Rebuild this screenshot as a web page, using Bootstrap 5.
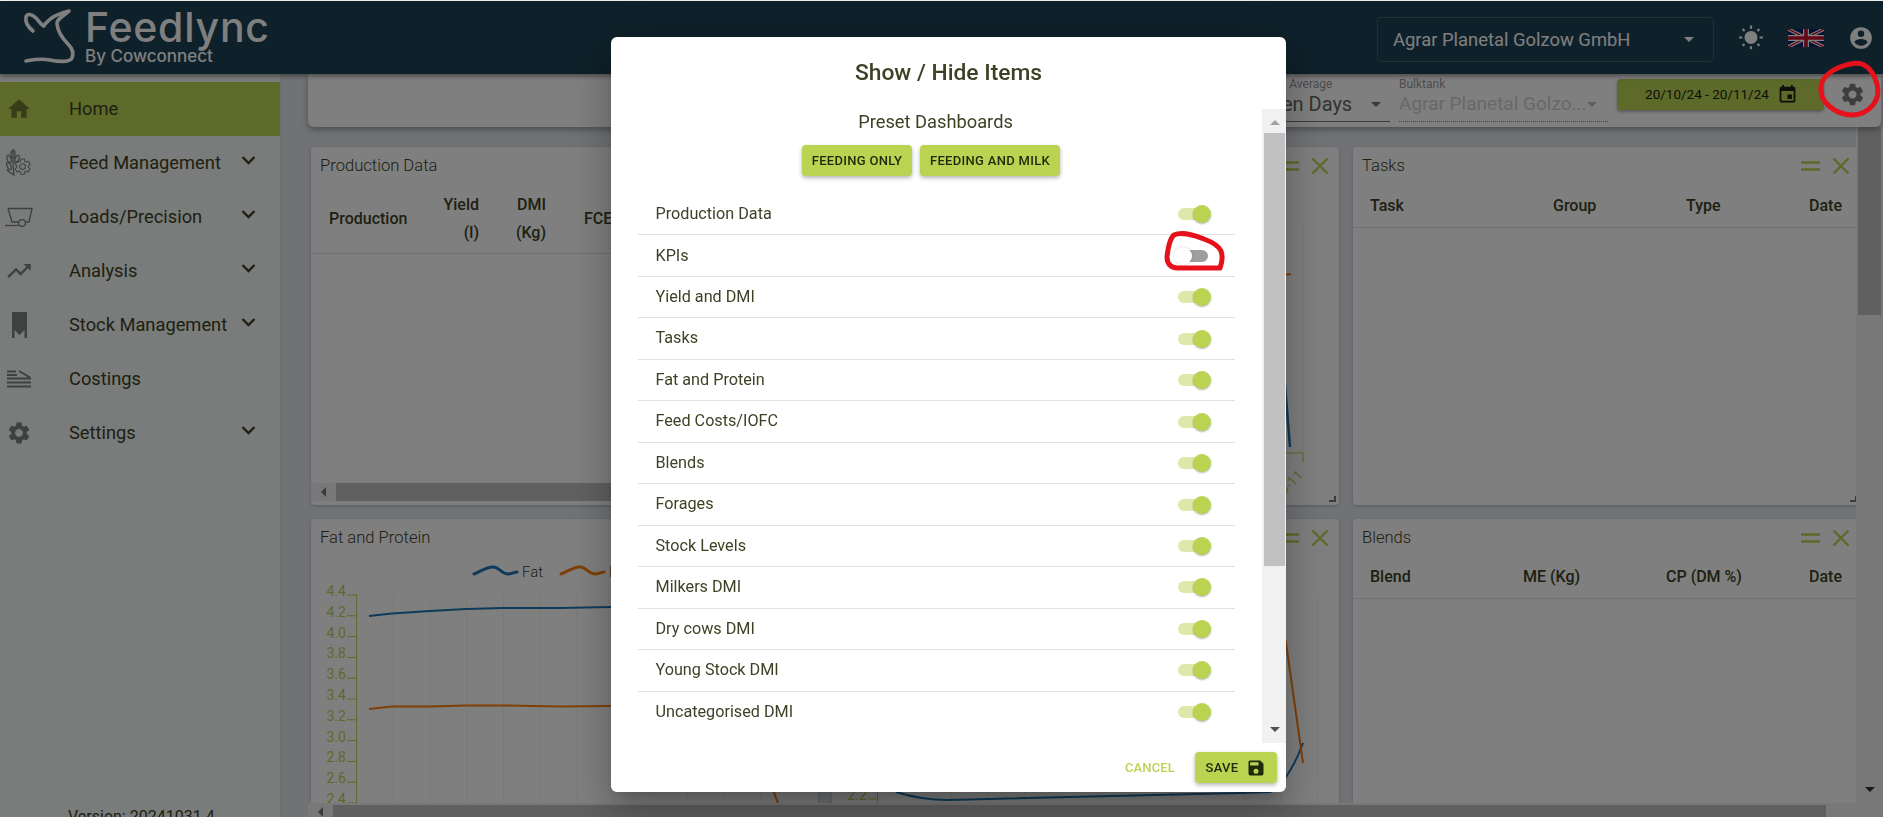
<!DOCTYPE html>
<html lang="en">
<head>
  <meta charset="UTF-8">
  <meta name="viewport" content="width=device-width, initial-scale=1">
  <title>Feedlync</title>
  <link href="https://cdn.jsdelivr.net/npm/bootstrap@5.3.3/dist/css/bootstrap.min.css" rel="stylesheet">
  <script src="https://cdn.jsdelivr.net/npm/bootstrap@5.3.3/dist/js/bootstrap.bundle.min.js"></script>
  <style>
    body { font-family: Roboto, "Liberation Sans", sans-serif; color: #3c4224; background: #fff; height: 817px; overflow: hidden; }
    .modal-backdrop { top: 1px; }

    .topbar { height: 73px; margin-top: 1px; background: #1c4052; color: #fff; box-shadow: 0 2px 5px rgba(0,0,0,.45); position: relative; z-index: 5; padding: 0 9px 0 22px; }
    .logo-text { margin: 0 0 2px 1px; }
    .logo-name { font-family: Inter, sans-serif; font-weight: 500; font-size: 41px; line-height: 34px; letter-spacing: .75px; }
    .logo-sub { font-family: Inter, sans-serif; font-weight: 500; font-size: 17px; line-height: 16px; margin-top: 4px; }
    .farm-select { width: 337px; height: 45px; margin-top: 4px; border: 1px solid #41606e; border-radius: 4px; padding: 0 19px 0 15px; font-size: 18.4px; }
    .caret-down { width: 0; height: 0; border-left: 5px solid transparent; border-right: 5px solid transparent; border-top: 5px solid currentColor; }
    .caret-up { width: 0; height: 0; border-left: 5px solid transparent; border-right: 5px solid transparent; border-bottom: 5px solid currentColor; }
    .flag-uk { width: 36px; height: 18px; }

    .below { height: 743px; background: #e0e4ec; }
    .side { width: 281px; flex: none; background: #f5f8f6; border-right: 1px solid #d8dcdc; padding-top: 8px; overflow: hidden; }
    .side .nav-link { height: 54px; padding: 0; color: #3c4224; font-size: 18.3px; }
    .side .nav-link.active-link { background: #bad452; }
    .side-ico { width: 38px; flex: none; margin-right: 31px; color: #7e8080; }
    .active-link .side-ico { color: #6f7a35; }
    .side-label { margin-top: -1px; }
    .side-chev { margin-left: auto; margin-right: 24px; margin-bottom: 6px; }
    .version { font-size: 16px; line-height: 24px; margin: auto 0 -12px 68px; }

    .filterbar { height: 53px; flex: none; margin: 0 2px 0 27px; background: #fff; border-radius: 0 0 6px 6px; box-shadow: 0 3px 6px rgba(0,0,0,.3); position: relative; z-index: 2; }
    .filter-field { height: 48px; padding-top: 3px; margin-right: 9px; flex: none; white-space: nowrap; }
    .filter-roll { width: 140px; border-bottom: 1px solid #777; color: #666; }
    .filter-tank { width: 209px; border-bottom: 1px dotted #888; color: #d0d0d0; }
    .filter-label { font-size: 12px; line-height: 14px; color: #999; }
    .filter-value { font-size: 20px; line-height: 22px; margin-top: 2px; }
    .filter-tank .filter-value { font-size: 19px; }
    .filter-roll .caret-down { margin-right: 9px; color: #777; }
    .filter-tank .caret-down { margin-right: 14px; color: #bbb; }
    .date-btn { width: 207px; height: 31px; margin: 5px 15px 0 0; padding: 0 0 0 2px; background: #bad452; border: 0; border-radius: 4px; font-size: 13.5px; color: #1c1c14; box-shadow: 0 2px 3px rgba(0,0,0,.3); }
    .gear-wrap { width: 27px; margin: 7px 15px 0 0; color: #7c7c7c; }

    .canvas { min-width: 0; overflow: hidden; }
    .below-main { min-height: 0; }
    .wgrid { display: grid; grid-template-columns: repeat(3, 507px); grid-auto-rows: 358px; gap: 14px; padding: 20px 0 0 30px; }
    .wbox { background: #fff; border-radius: 4px; position: relative; box-shadow: 0 1px 3px rgba(0,0,0,.2); overflow: hidden; }
    .wbox.resizable::after { content: ""; position: absolute; right: 3px; bottom: 3px; width: 7px; height: 6px; border-right: 2px solid #777; border-bottom: 2px solid #777; }
    .whead { height: 36px; padding: 2px 10px 0 9px; font-size: 16.6px; font-weight: 300; color: #3c4224; }
    .whead-btns { margin-left: auto; gap: 12px; }
    .wtable { table-layout: fixed; margin: 0; width: 100%; font-size: 16px; --bs-table-bg: transparent; --bs-table-color: #3c4224; }
    .wtable th { padding: 2px 0 0; font-weight: 500; vertical-align: middle; line-height: 28px; border-bottom: 1px solid #e2e2e2; }
    .wtable th:first-child { padding-left: 17px; }
    .wtable.h-tall th { height: 70px; }
    .wtable.h-tall th:first-child { padding-left: 18px; }
    .wtable.h-task th { height: 44px; }
    .wtable.h-blend th { height: 43px; }
    .col-prod { width: 168px; }
    .col-num { width: 67px; }
    .col-gap { width: 38px; }
    .col-task { width: 200px; }
    .col-group { width: 133px; }
    .col-type { width: 123px; }
    .col-blend { width: 170px; }
    .col-me { width: 143px; }
    .col-cp { width: 143px; }
    .hscroll-in { height: 18px; margin-top: 229px; background: #f1f1f1; }
    .hscroll-in .caret-left { margin: 0 10px 0 10px; }
    .caret-left { width: 0; height: 0; border-top: 5px solid transparent; border-bottom: 5px solid transparent; border-right: 5px solid #777; }
    .hthumb { background: #c1c1c1; height: 100%; }
    .hscroll-in .hthumb { flex: 1; }
    .chart-svg { display: block; }
    .axis-txt { font-family: Roboto, sans-serif; font-size: 14px; fill: #bad452; }
    .legend-txt { font-family: Roboto, sans-serif; font-size: 15px; font-weight: 300; fill: #3c4224; }

    .vscroll { width: 27px; flex: none; background: #f1f1f1; padding: 0 2px 11px; color: #333; }
    .vthumb { height: 188px; background: #c1c1c1; }
    .hscroll { height: 14px; flex: none; margin-left: 27px; background: #f1f1f1; padding-top: 2px; color: #777; }
    .hscroll .caret-left { margin: 2px 10px 0 10px; }
    .hscroll .hthumb { width: 1493px; }

    .modal-dialog.items-dialog { max-width: none; width: 675px; margin: 37px 0 0 611px; }
    .items-dialog .modal-content { height: 755px; border: 0; border-radius: 6px; box-shadow: 0 11px 15px -7px rgba(0,0,0,.2), 0 24px 38px 3px rgba(0,0,0,.14), 0 9px 46px 8px rgba(0,0,0,.12); overflow: hidden; }
    .items-head { height: 72px; flex: none; padding-top: 21px; text-align: center; font-size: 22.8px; line-height: 30px; font-weight: 500; }
    .items-body { height: 634px; flex: none; }
    .items-main { padding: 0 27px; min-width: 0; }
    .preset-title { height: 36px; padding-right: 2px; font-size: 18.3px; line-height: 26px; text-align: center; }
    .btn-lime { background: #bad452; color: #1e2a0a; border: 0; border-radius: 4px; height: 31px; padding: 0; font-size: 13px; font-weight: 500; letter-spacing: .3px; box-shadow: 0 2px 4px rgba(0,0,0,.3); }
    .btn-lime:hover { background: #bad452; color: #1e2a0a; }
    .btn-only { width: 110px; }
    .btn-milk { width: 140px; }
    .preset-row { height: 49px; padding-right: 11px; }
    .items-list { --bs-list-group-bg: transparent; --bs-list-group-color: #3c4224; --bs-list-group-border-color: #e0e0e0; }
    .items-list .list-group-item { height: 41.47px; padding: 0 24px 0 17.5px; font-size: 16.2px; border-width: 0 0 1px; }
    .tog { display: block; width: 33px; height: 18px; position: relative; }
    .tog::before { content: ""; position: absolute; left: 0; right: 3px; top: 3px; height: 12px; border-radius: 6px; background: #dde8a9; }
    .tog::after { content: ""; position: absolute; right: 0; top: 0; width: 18px; height: 18px; border-radius: 50%; background: #bad452; box-shadow: 0 1px 2px rgba(0,0,0,.3); }
    .tog.tog-off::before { background: #9e9e9e; }
    .tog.tog-off::after { right: auto; left: -4px; background: #fff; box-shadow: 0 0 2px rgba(0,0,0,.2); }
    .items-bar { width: 24px; flex: none; background: #f1f1f1; padding: 0 1px 0 2px; }
    .items-bar .caret-up { margin: 11px auto 8px; color: #a3a3a3; }
    .items-bar .caret-down { margin: auto auto 11px; color: #505050; }
    .items-thumb { height: 433px; background: #c1c1c1; }
    .items-foot { flex: 1; padding-right: 9px; gap: 20px; }
    .cancel-link { font-size: 13px; font-weight: 500; color: #bad452; letter-spacing: .15px; }
    .btn-save { width: 82px; gap: 8px; }
    .ink-layer { position: fixed; left: 0; top: 0; z-index: 1060; pointer-events: none; }
  </style>
</head>
<body>

  <header class="topbar d-flex align-items-center">
    <svg width="62" height="60" viewBox="22 8 62 60" fill="none" stroke="#fff" stroke-width="3.6" stroke-linecap="round" stroke-linejoin="round">
      <path d="M33 31C28 27 25 22 26 17C27 13 32 14 36 18C39 21 41 25 44 26"/>
      <path d="M45 24C50 18 60 13 69 11C64 16 56 19 57 24C58 32 62 38 68 44C72 48 74 53 72 58C70 62 60 62 50 60C40 58 32 60 26 61"/>
    </svg>
    <div class="logo-text">
      <div class="logo-name">Feedlync</div>
      <div class="logo-sub">By Cowconnect</div>
    </div>
    <div class="farm-select d-flex align-items-center justify-content-between ms-auto">
      <span>Agrar Planetal Golzow GmbH</span><span class="caret-down"></span>
    </div>
    <svg class="ms-4" width="26" height="26" viewBox="0 0 24 24" fill="#fff"><path d="M3.55,18.54L4.96,19.95L6.76,18.16L5.34,16.74M11,22.45C11.32,22.45 13,22.45 13,22.45V19.5H11M12,5.5A6,6 0 0,0 6,11.5A6,6 0 0,0 12,17.5A6,6 0 0,0 18,11.5C18,8.18 15.31,5.5 12,5.5M20,12.5H23V10.5H20M17.24,18.16L19.04,19.95L20.45,18.54L18.66,16.74M20.45,4.46L19.04,3.05L17.24,4.84L18.66,6.26M13,0.55H11V3.5H13M4,10.5H1V12.5H4M6.76,4.84L4.96,3.05L3.55,4.46L5.34,6.26L6.76,4.84Z"/></svg>
    <svg class="flag-uk ms-4" viewBox="0 0 60 30">
      <rect width="60" height="30" fill="#012169"/>
      <path d="M0 0L60 30M60 0L0 30" stroke="#fff" stroke-width="6"/>
      <path d="M0 0L60 30M60 0L0 30" stroke="#c8102e" stroke-width="2.5"/>
      <path d="M30 0V30M0 15H60" stroke="#fff" stroke-width="10"/>
      <path d="M30 0V30M0 15H60" stroke="#c8102e" stroke-width="6"/>
    </svg>
    <svg class="ms-4" width="26" height="26" viewBox="0 0 24 24" fill="#fff"><path d="M12,19.2C9.5,19.2 7.29,17.92 6,16C6.03,14 10,12.9 12,12.9C14,12.9 17.97,14 18,16C16.71,17.92 14.5,19.2 12,19.2M12,5A3,3 0 0,1 15,8A3,3 0 0,1 12,11A3,3 0 0,1 9,8A3,3 0 0,1 12,5M12,2A10,10 0 0,0 2,12A10,10 0 0,0 12,22A10,10 0 0,0 22,12A10,10 0 0,0 12,2Z"/></svg>
  </header>

  <div class="below d-flex">
    <aside class="side d-flex flex-column">
      <nav class="nav flex-column" id="side-nav"></nav>
      <div class="version">Version: 20241031.4</div>
    </aside>

    <main class="flex-grow-1 d-flex flex-column canvas">
      <div class="filterbar d-flex justify-content-end align-items-start">
        <div class="filter-field filter-roll">
          <div class="filter-label">Rolling Average</div>
          <div class="filter-value d-flex justify-content-between align-items-center"><span>Seven Days</span><span class="caret-down"></span></div>
        </div>
        <div class="filter-field filter-tank">
          <div class="filter-label">Bulktank</div>
          <div class="filter-value d-flex justify-content-between align-items-center"><span>Agrar Planetal Golzo...</span><span class="caret-down"></span></div>
        </div>
        <button class="btn date-btn d-flex align-items-center justify-content-center gap-2">
          <span>20/10/24 - 20/11/24</span>
          <svg width="21" height="21" viewBox="0 0 24 24" fill="currentColor"><path d="M17 12h-5v5h5v-5zM16 1v2H8V1H6v2H5c-1.11 0-1.99.9-1.99 2L3 19c0 1.1.89 2 2 2h14c1.1 0 2-.9 2-2V5c0-1.1-.9-2-2-2h-1V1h-2zm3 18H5V8h14v11z"/></svg>
        </button>
        <div class="gear-wrap">
          <svg width="27" height="27" viewBox="0 0 24 24" fill="currentColor" class="d-block"><use href="#ico-gear"/></svg>
        </div>
      </div>

      <div class="d-flex flex-grow-1 below-main">
        <div class="canvas flex-grow-1">
          <div class="wgrid">
            <section class="wbox resizable">
              <div class="whead d-flex align-items-center"><span>Production Data</span></div>
              <table class="table wtable h-tall">
                <thead><tr>
                  <th class="col-prod"><div class="d-flex justify-content-between align-items-center"><span>Production</span><span class="text-end">Yield<br>(l)</span></div></th>
                  <th class="col-num text-end">DMI<br>(Kg)</th>
                  <th class="col-gap"></th>
                  <th>FCE</th>
                </tr></thead>
              </table>
              <div class="hscroll-in d-flex align-items-center"><span class="caret-left"></span><span class="hthumb"></span></div>
            </section>

            <section class="wbox resizable">
              <div class="whead d-flex align-items-center"><span>Yield and DMI</span><span class="d-flex align-items-center whead-btns" data-btns></span></div>
              <svg class="chart-svg" width="507" height="322" viewBox="832 183 507 322" fill="none">
                <path d="M1303 223V462" stroke="#bad452" stroke-opacity=".3"/>
                <path d="M1270 453H1303V462" stroke="#bad452"/>
                <path d="M1270 277L1291 274" stroke="#ff7f0e" stroke-width="2"/>
                <path d="M1283 360L1290 447" stroke="#1f77b4" stroke-width="2.5"/>
                <text class="axis-txt" transform="translate(1304 476) rotate(-45)" text-anchor="end">20-11</text>
              </svg>
            </section>

            <section class="wbox resizable">
              <div class="whead d-flex align-items-center"><span>Tasks</span><span class="d-flex align-items-center whead-btns" data-btns></span></div>
              <table class="table wtable h-task">
                <thead><tr>
                  <th class="col-task">Task</th><th class="col-group">Group</th><th class="col-type">Type</th><th>Date</th>
                </tr></thead>
              </table>
            </section>

            <section class="wbox">
              <div class="whead d-flex align-items-center"><span>Fat and Protein</span></div>
              <svg class="chart-svg" width="507" height="322" viewBox="311 555 507 322" fill="none" id="chart-fat">
                <path d="M474 574C482 571 487 566 494 567C500 568 502 574 508 574C511 574 515 572 517 572" stroke="#1f77b4" stroke-width="3" stroke-linecap="round"/>
                <text class="legend-txt" x="522" y="577">Fat</text>
                <path d="M561 574C569 571 574 566 581 567C587 568 589 574 595 574C598 574 602 572 604 572" stroke="#ff7f0e" stroke-width="3" stroke-linecap="round"/>
                <text class="legend-txt" x="609" y="577">Protein</text>
                <path d="M369 616L392 613.5L430 611L466 609L503 608L560 608L611 607L780 607" stroke="#1f77b4" stroke-width="2"/>
                <path d="M369 709L392 706.5L430 706.5L466 705.5L503 705.5L560 706.5L611 706L760 706L770 782L778 803" stroke="#ff7f0e" stroke-width="2"/>
              </svg>
            </section>

            <section class="wbox">
              <div class="whead d-flex align-items-center"><span>Feed Costs/IOFC</span><span class="d-flex align-items-center whead-btns" data-btns></span></div>
              <svg class="chart-svg" width="507" height="322" viewBox="832 555 507 322" fill="none" id="chart-cost">
                <path d="M868 799H877.5M877.5 595V803" stroke="#bad452"/>
                <text class="axis-txt" x="867" y="800" text-anchor="end">2.2</text>
                <path d="M896 792C915 798 930 800 948 800L1240 793L1270 792C1280 790 1295 765 1303 743" stroke="#1f77b4" stroke-width="2"/>
                <path d="M1270 580L1286 643L1303 763" stroke="#ff7f0e" stroke-width="2"/>
              </svg>
            </section>

            <section class="wbox">
              <div class="whead d-flex align-items-center"><span>Blends</span><span class="d-flex align-items-center whead-btns" data-btns></span></div>
              <table class="table wtable h-blend">
                <thead><tr>
                  <th class="col-blend">Blend</th><th class="col-me">ME (Kg)</th><th class="col-cp">CP (DM %)</th><th>Date</th>
                </tr></thead>
              </table>
            </section>
          </div>
        </div>
        <div class="vscroll d-flex flex-column">
          <div class="vthumb"></div>
          <span class="caret-down mx-auto mt-auto"></span>
        </div>
      </div>

      <div class="hscroll d-flex">
        <span class="caret-left"></span><span class="hthumb"></span>
      </div>
    </main>
  </div>

  <div class="modal-backdrop show"></div>

  <div class="modal d-block" role="dialog">
    <div class="modal-dialog items-dialog">
      <div class="modal-content">
        <div class="items-head">Show / Hide Items</div>
        <div class="items-body d-flex">
          <div class="items-main flex-grow-1">
            <div class="preset-title">Preset Dashboards</div>
            <div class="preset-row d-flex justify-content-center gap-2">
              <button class="btn btn-lime btn-only">FEEDING ONLY</button>
              <button class="btn btn-lime btn-milk">FEEDING AND MILK</button>
            </div>
            <ul class="list-group list-group-flush items-list" id="item-list"></ul>
          </div>
          <div class="items-bar d-flex flex-column">
            <span class="caret-up"></span>
            <div class="items-thumb"></div>
            <span class="caret-down"></span>
          </div>
        </div>
        <div class="items-foot d-flex align-items-center justify-content-end">
          <span class="cancel-link">CANCEL</span>
          <button class="btn btn-lime btn-save d-flex align-items-center justify-content-center">
            <span>SAVE</span>
            <svg width="20" height="20" viewBox="0 0 24 24" fill="currentColor"><path d="M15,9H5V5H15M12,19A3,3 0 0,1 9,16A3,3 0 0,1 12,13A3,3 0 0,1 15,16A3,3 0 0,1 12,19M17,3H5C3.89,3 3,3.9 3,5V19A2,2 0 0,0 5,21H19A2,2 0 0,0 21,19V7L17,3Z"/></svg>
          </button>
        </div>
      </div>
    </div>
  </div>

  <!-- hand drawn red marks on the screenshot -->
  <svg class="ink-layer" width="1883" height="817" viewBox="0 0 1883 817" fill="none" stroke="#e5121c" stroke-width="5" stroke-linecap="round" stroke-linejoin="round">
    <path d="M1840 67C1848 64 1856 62 1862 64C1870 67 1874 74 1877 84C1879 92 1877 100 1873 105C1868 111 1860 115 1852 115C1844 115 1836 112 1829 106C1823 101 1820 94 1821 86C1822 78 1830 71 1840 67Z"/>
    <path d="M1219 268C1205 268 1190 268 1178 268C1170 268 1167 263 1167 257C1168 248 1170 238 1174 235C1180 232 1192 234 1204 239C1212 242 1219 246 1221 251C1223 257 1222 263 1220 268"/>
  </svg>

  <svg width="0" height="0" class="position-absolute">
    <symbol id="ico-gear" viewBox="0 0 24 24"><path d="M19.14,12.94c0.04-0.3,0.06-0.61,0.06-0.94c0-0.32-0.02-0.64-0.07-0.94l2.03-1.58c0.18-0.14,0.23-0.41,0.12-0.61 l-1.92-3.32c-0.12-0.22-0.37-0.29-0.59-0.22l-2.39,0.96c-0.5-0.38-1.03-0.7-1.62-0.94L14.4,2.81c-0.04-0.24-0.24-0.41-0.48-0.41 h-3.84c-0.24,0-0.43,0.17-0.47,0.41L9.25,5.35C8.66,5.59,8.12,5.92,7.63,6.29L5.24,5.33c-0.22-0.08-0.47,0-0.59,0.22L2.74,8.87 C2.62,9.08,2.66,9.34,2.86,9.48l2.03,1.58C4.84,11.36,4.8,11.69,4.8,12s0.02,0.64,0.07,0.94l-2.03,1.58 c-0.18,0.14-0.23,0.41-0.12,0.61l1.92,3.32c0.12,0.22,0.37,0.29,0.59,0.22l2.39-0.96c0.5,0.38,1.03,0.7,1.62,0.94l0.36,2.54 c0.05,0.24,0.24,0.41,0.48,0.41h3.84c0.24,0,0.44-0.17,0.47-0.41l0.36-2.54c0.59-0.24,1.13-0.56,1.62-0.94l2.39,0.96 c0.22,0.08,0.47,0,0.59-0.22l1.92-3.32c0.12-0.22,0.07-0.47-0.12-0.61L19.14,12.94z M12,15.6c-1.98,0-3.6-1.62-3.6-3.6 s1.62-3.6,3.6-3.6s3.6,1.62,3.6,3.6S13.98,15.6,12,15.6z"/></symbol>
  </svg>

  <script>
    const sideIcons = {
      home: '<svg width="26" height="26" viewBox="0 0 24 24" fill="currentColor"><path d="M10 20v-6h4v6h5v-8h3L12 3 2 12h3v8h5z"/></svg>',
      feed: '<svg width="28" height="28" viewBox="0 0 28 28" fill="none" stroke="currentColor" stroke-width="1.3"><path d="M9 27C8 20 8 10 8 2"/><ellipse cx="8" cy="5" rx="2" ry="4"/><ellipse cx="4" cy="10" rx="1.8" ry="4" transform="rotate(-20 4 10)"/><ellipse cx="4" cy="17" rx="1.8" ry="4" transform="rotate(-25 4 17)"/><ellipse cx="12" cy="10" rx="1.8" ry="4" transform="rotate(20 12 10)"/><path d="M8 25C4 24 3 22 2 20"/><path transform="translate(8 8) scale(.8)" d="M19.14,12.94c0.04-0.3,0.06-0.61,0.06-0.94c0-0.32-0.02-0.64-0.07-0.94l2.03-1.58c0.18-0.14,0.23-0.41,0.12-0.61 l-1.92-3.32c-0.12-0.22-0.37-0.29-0.59-0.22l-2.39,0.96c-0.5-0.38-1.03-0.7-1.62-0.94L14.4,2.81c-0.04-0.24-0.24-0.41-0.48-0.41 h-3.84c-0.24,0-0.43,0.17-0.47,0.41L9.25,5.35C8.66,5.59,8.12,5.92,7.63,6.29L5.24,5.33c-0.22-0.08-0.47,0-0.59,0.22L2.74,8.87 C2.62,9.08,2.66,9.34,2.86,9.48l2.03,1.58C4.84,11.36,4.8,11.69,4.8,12s0.02,0.64,0.07,0.94l-2.03,1.58 c-0.18,0.14-0.23,0.41-0.12,0.61l1.92,3.32c0.12,0.22,0.37,0.29,0.59,0.22l2.39-0.96c0.5,0.38,1.03,0.7,1.62,0.94l0.36,2.54 c0.05,0.24,0.24,0.41,0.48,0.41h3.84c0.24,0,0.44-0.17,0.47-0.41l0.36-2.54c0.59-0.24,1.13-0.56,1.62-0.94l2.39,0.96 c0.22,0.08,0.47,0,0.59-0.22l1.92-3.32c0.12-0.22,0.07-0.47-0.12-0.61L19.14,12.94z M12,15.6c-1.98,0-3.6-1.62-3.6-3.6 s1.62-3.6,3.6-3.6s3.6,1.62,3.6,3.6S13.98,15.6,12,15.6z"/></svg>',
      load: '<svg width="28" height="21" viewBox="0 0 28 21" fill="none" stroke="currentColor" stroke-width="1.4"><path d="M3 1.5H27L24 15H20.5M3 1.5L7 15H14"/><circle cx="17" cy="16" r="3.4"/><path d="M0 18.5H13"/></svg>',
      trend: '<svg width="28" height="28" viewBox="0 0 24 24" fill="currentColor"><path d="M16 6l2.29 2.29-4.88 4.88-4-4L2 16.59 3.41 18l6-6 4 4 6.3-6.29L22 12V6z"/></svg>',
      silo: '<svg width="15" height="26" viewBox="0 0 15 26" fill="currentColor"><path d="M0 0H15V26H12.5V18L7.5 23L2.5 18V26H0Z"/></svg>',
      cost: '<svg width="24" height="18" viewBox="0 0 24 18" fill="none" stroke="currentColor" stroke-width="2"><path d="M0 1.5H9M0 5H10M0 8.5H24M0 12.5H24M0 16.5H24M12 1L23 7.5"/></svg>',
      gear: '<svg width="26" height="26" viewBox="0 0 24 24" fill="currentColor"><use href="#ico-gear"/></svg>'
    };

    const sideItems = [
      { name: 'Home', icon: 'home', active: true },
      { name: 'Feed Management', icon: 'feed', more: true },
      { name: 'Loads/Precision', icon: 'load', more: true },
      { name: 'Analysis', icon: 'trend', more: true },
      { name: 'Stock Management', icon: 'silo', more: true },
      { name: 'Costings', icon: 'cost' },
      { name: 'Settings', icon: 'gear', more: true }
    ];

    const dashItems = [
      'Production Data', 'KPIs', 'Yield and DMI', 'Tasks', 'Fat and Protein', 'Feed Costs/IOFC', 'Blends',
      'Forages', 'Stock Levels', 'Milkers DMI', 'Dry cows DMI', 'Young Stock DMI', 'Uncategorised DMI'
    ];

    const chevron = '<svg class="side-chev" width="15" height="9" viewBox="0 0 15 9" fill="none" stroke="#3c4224" stroke-width="2.4"><path d="M1.5 1L7.5 7L13.5 1"/></svg>';

    document.getElementById('side-nav').innerHTML = sideItems.map(item => `
      <a class="nav-link d-flex align-items-center ${item.active ? 'active-link' : ''}" href="#">
        <span class="side-ico d-flex justify-content-center">${sideIcons[item.icon]}</span>
        <span class="side-label">${item.name}</span>
        ${item.more ? chevron : ''}
      </a>`).join('');

    document.getElementById('item-list').innerHTML = dashItems.map(name => `
      <li class="list-group-item d-flex justify-content-between align-items-center">
        <span>${name}</span>
        <span class="tog ${name === 'KPIs' ? 'tog-off' : ''}"></span>
      </li>`).join('');

    document.querySelectorAll('[data-btns]').forEach(el => {
      el.innerHTML = `
        <svg width="19" height="10" viewBox="0 0 19 10" stroke="#bad452" stroke-width="2.4"><path d="M0 1.5H19M0 8.5H19"/></svg>
        <svg width="18" height="18" viewBox="0 0 18 18" stroke="#bad452" stroke-width="2.4"><path d="M1.5 1.5L16.5 16.5M16.5 1.5L1.5 16.5"/></svg>`;
    });

    // chart axes: gridlines every 36.7px, y ticks every 0.2
    function gridLines(axisX) {
      let out = '';
      for (let i = 1; i <= 12; i++) {
        const x = axisX + i * 36.7;
        out += `<path d="M${x} 595V803" stroke="#bad452" stroke-opacity=".2"/>`;
      }
      return out;
    }

    let ticks = `<path d="M356.6 595V803" stroke="#bad452"/>`;
    for (let i = 0; i <= 10; i++) {
      const y = 595 + i * 20.8;
      const label = (4.4 - i * 0.2).toFixed(1);
      ticks += `<path d="M347 ${y}H357" stroke="#bad452"/><text class="axis-txt" x="346" y="${y + 1}" text-anchor="end">${label}</text>`;
    }
    const fat = document.getElementById('chart-fat');
    fat.insertAdjacentHTML('afterbegin', gridLines(356.6) + ticks);
    const cost = document.getElementById('chart-cost');
    cost.insertAdjacentHTML('afterbegin', gridLines(877.5));
  </script>

</body>
</html>
